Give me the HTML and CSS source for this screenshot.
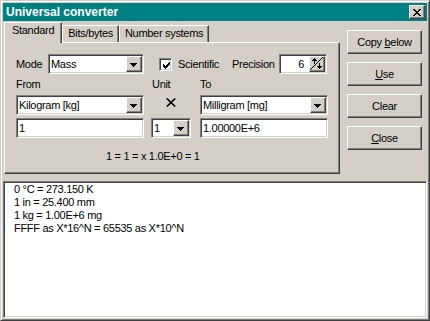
FILE: index.html
```html
<!DOCTYPE html>
<html lang="en">
<head>
    <meta charset="UTF-8">
    <title>Universal converter</title>
    <link rel="stylesheet" href="styles.css">
</head>
<body>
    <div class="window">
        <div class="titlebar">
            <span class="title">Universal converter</span>
            <span class="close-btn">
                <svg width="8" height="7" viewBox="0 0 8 7" shape-rendering="crispEdges">
                    <path d="M0 0h2v1H0zM6 0h2v1H6zM1 1h2v1H1zM5 1h2v1H5zM2 2h4v1H2zM3 3h2v1H3zM2 4h4v1H2zM1 5h2v1H1zM5 5h2v1H5zM0 6h2v1H0zM6 6h2v1H6z" fill="#000"/>
                </svg>
            </span>
        </div>

        <div class="main">
            <div class="tabs-col">
                <div class="tab-strip">
                    <div class="tab active">Standard</div>
                    <div class="tab">Bits/bytes</div>
                    <div class="tab">Number systems</div>
                </div>
                <div class="panel">
                    <!-- 第一行: 模式 / 科学计数 / 精度 -->
                    <div class="row-mode">
                        <span class="lbl lbl-mode">Mode</span>
                        <div class="combo sunken combo-mode">
                            <span class="combo-val">Mass</span>
                            <span class="drop raised">
                                <svg width="7" height="4" viewBox="0 0 7 4" shape-rendering="crispEdges"><path d="M0 0h7v1H0zM1 1h5v1H1zM2 2h3v1H2zM3 3h1v1H3z" fill="#000"/></svg>
                            </span>
                        </div>
                        <span class="checkbox sunken">
                            <svg width="7" height="7" viewBox="0 0 7 7" shape-rendering="crispEdges"><path d="M6 0h1v1H6zM5 1h2v1H5zM0 2h1v1H0zM4 2h3v1H4zM0 3h2v1H0zM3 3h3v1H3zM0 4h5v1H0zM1 5h3v1H1zM2 6h1v1H2z" fill="#000"/></svg>
                        </span>
                        <span class="check-label">Scientific</span>
                        <span class="lbl lbl-prec">Precision</span>
                        <div class="spin-edit sunken">
                            <span class="spin-val">6</span>
                            <span class="spin-btn raised">
                                <svg width="14" height="14" viewBox="0 0 14 14" shape-rendering="crispEdges">
                                    <path d="M0 13L13 0" stroke="#000" stroke-width="1" shape-rendering="auto"/>
                                    <path d="M4 1h1v1H4zM3 2h3v1H3zM2 3h5v1H2zM4 4h1v3H4z" fill="#000"/>
                                    <path d="M9 6h1v3H9zM7 9h5v1H7zM8 10h3v1H8zM9 11h1v1H9z" fill="#000"/>
                                </svg>
                            </span>
                        </div>
                    </div>

                    <!-- 单位换算 -->
                    <div class="unit-grid">
                        <span class="grid-lbl">From</span>
                        <span class="grid-lbl lbl-unit">Unit</span>
                        <span class="grid-lbl">To</span>

                        <div class="combo sunken combo-wide">
                            <span class="combo-val">Kilogram [kg]</span>
                            <span class="drop raised">
                                <svg width="7" height="4" viewBox="0 0 7 4" shape-rendering="crispEdges"><path d="M0 0h7v1H0zM1 1h5v1H1zM2 2h3v1H2zM3 3h1v1H3z" fill="#000"/></svg>
                            </span>
                        </div>
                        <span class="times">
                            <svg width="10" height="9" viewBox="0 0 10 9"><path d="M0.8 0.5L9.2 8.5M9.2 0.5L0.8 8.5" stroke="#000" stroke-width="1.6"/></svg>
                        </span>
                        <div class="combo sunken combo-wide">
                            <span class="combo-val">Milligram [mg]</span>
                            <span class="drop raised">
                                <svg width="7" height="4" viewBox="0 0 7 4" shape-rendering="crispEdges"><path d="M0 0h7v1H0zM1 1h5v1H1zM2 2h3v1H2zM3 3h1v1H3z" fill="#000"/></svg>
                            </span>
                        </div>

                        <div class="edit sunken edit-wide">1</div>
                        <div class="combo sunken combo-unit">
                            <span class="combo-val">1</span>
                            <span class="drop raised">
                                <svg width="7" height="4" viewBox="0 0 7 4" shape-rendering="crispEdges"><path d="M0 0h7v1H0zM1 1h5v1H1zM2 2h3v1H2zM3 3h1v1H3z" fill="#000"/></svg>
                            </span>
                        </div>
                        <div class="edit sunken edit-wide">1.00000E+6</div>
                    </div>

                    <div class="formula">1 = 1 = x 1.0E+0 = 1</div>
                </div>
            </div>

            <div class="buttons">
                <button class="btn raised">Copy <u>b</u>elow</button>
                <button class="btn raised"><u>U</u>se</button>
                <button class="btn raised">Clear</button>
                <button class="btn raised"><u>C</u>lose</button>
            </div>
        </div>

        <div class="memo sunken">
            <div>0 °C = 273.150 K</div>
            <div>1 in = 25.400 mm</div>
            <div>1 kg = 1.00E+6 mg</div>
            <div>FFFF as X*16^N = 65535 as X*10^N</div>
        </div>
    </div>
</body>
</html>
```

FILE: styles.css
```css
* {
    margin: 0;
    padding: 0;
    box-sizing: border-box;
}
body {
    font-family: "Liberation Sans", Arial, sans-serif;
    font-size: 11px;
    line-height: 13px;
    letter-spacing: -0.3px;
    color: #000;
    background: #d4d0c8;
}
/* 凹陷 / 凸起 的边框 */
.sunken {
    border: 1px solid;
    border-color: #808080 #fff #fff #808080;
    box-shadow: inset 1px 1px #404040, inset -1px -1px #d4d0c8;
    background: #fff;
}
.raised {
    border: 1px solid;
    border-color: #fff #404040 #404040 #fff;
    box-shadow: inset -1px -1px #808080;
    background: #d4d0c8;
}
.window {
    width: 430px;
    height: 321px;
    border: 1px solid;
    border-color: #d4d0c8 #404040 #404040 #d4d0c8;
    box-shadow: inset 1px 1px #fff, inset -1px -1px #808080;
    padding: 2px;
    display: flex;
    flex-direction: column;
}
.titlebar {
    height: 18px;
    background: #008080;
    color: #fff;
    display: flex;
    align-items: center;
    justify-content: space-between;
    padding: 0 2px 0 3px;
}
.title {
    font-weight: bold;
    font-size: 12px;
    line-height: 18px;
    letter-spacing: 0;
}
.close-btn {
    width: 16px;
    height: 14px;
    border: 1px solid;
    border-color: #fff #404040 #404040 #fff;
    box-shadow: inset -1px -1px #808080;
    background: #d4d0c8;
    display: flex;
    align-items: center;
    justify-content: center;
}
.close-btn svg {
    display: block;
    margin-left: -1px;
}
.main {
    display: flex;
    padding: 1px 0 0 1px;
}
.tabs-col {
    width: 336px;
}
.tab-strip {
    height: 20px;
    display: flex;
    align-items: flex-end;
}
.tab {
    height: 17px;
    padding: 1px 5px 0;
    border-top: 1px solid #fff;
    border-left: 1px solid #fff;
    border-right: 1px solid #404040;
    box-shadow: inset -1px 0 #808080;
    text-align: center;
    white-space: nowrap;
}
.tab.active {
    height: 21px;
    margin-bottom: -1px;
    padding: 1px 7px 0;
    background: #d4d0c8;
    position: relative;
    z-index: 1;
}
.panel {
    height: 132px;
    border: 1px solid;
    border-color: #fff #404040 #404040 #fff;
    box-shadow: inset -1px -1px #808080;
    padding: 11px 0 0 11px;
}
.row-mode {
    display: flex;
    align-items: center;
    height: 20px;
}
.lbl-mode {
    width: 32px;
}
.combo {
    height: 20px;
    padding: 1px;
    display: flex;
}
.combo-val {
    flex: 1;
    padding-left: 1px;
    line-height: 16px;
    white-space: nowrap;
    overflow: hidden;
}
.drop {
    width: 16px;
    height: 16px;
    display: flex;
    align-items: center;
    justify-content: center;
}
.drop svg {
    display: block;
    margin: 1px 1px 0 0;
}
.combo-mode {
    width: 96px;
}
.checkbox {
    width: 13px;
    height: 13px;
    margin-left: 15px;
    padding: 2px;
}
.checkbox svg {
    display: block;
    margin: 1px;
}
.check-label {
    width: 54px;
    margin-left: 6px;
}
.lbl-prec {
    width: 47px;
}
.spin-edit {
    width: 48px;
    height: 20px;
    padding: 1px;
    display: flex;
}
.spin-val {
    flex: 1;
    text-align: right;
    padding-right: 5px;
    line-height: 16px;
}
.spin-btn {
    width: 16px;
    height: 16px;
}
.spin-btn svg {
    display: block;
}
.unit-grid {
    display: grid;
    grid-template-columns: 135px 49px 128px;
    row-gap: 3px;
    margin-top: 4px;
    align-items: start;
}
.grid-lbl {
    height: 14px;
}
.lbl-unit {
    padding-left: 1px;
}
.combo-wide,
.edit-wide {
    width: 128px;
}
.combo-unit {
    width: 40px;
}
.times {
    width: 40px;
    display: flex;
    justify-content: center;
    padding-top: 3px;
}
.times svg {
    display: block;
}
.edit {
    height: 20px;
    padding: 1px 1px 1px 2px;
    line-height: 16px;
    white-space: nowrap;
}
.formula {
    margin: 12px 0 0 90px;
}
.buttons {
    margin-left: 7px;
    padding-top: 8px;
    display: flex;
    flex-direction: column;
    gap: 8px;
}
.btn {
    width: 75px;
    height: 24px;
    font-family: "Liberation Sans", Arial, sans-serif;
    font-size: 11px;
    line-height: 13px;
    letter-spacing: -0.3px;
    color: #000;
    text-align: center;
}
.memo {
    flex: 1;
    margin-top: 7px;
    padding: 1px 0 0 10px;
}
```
